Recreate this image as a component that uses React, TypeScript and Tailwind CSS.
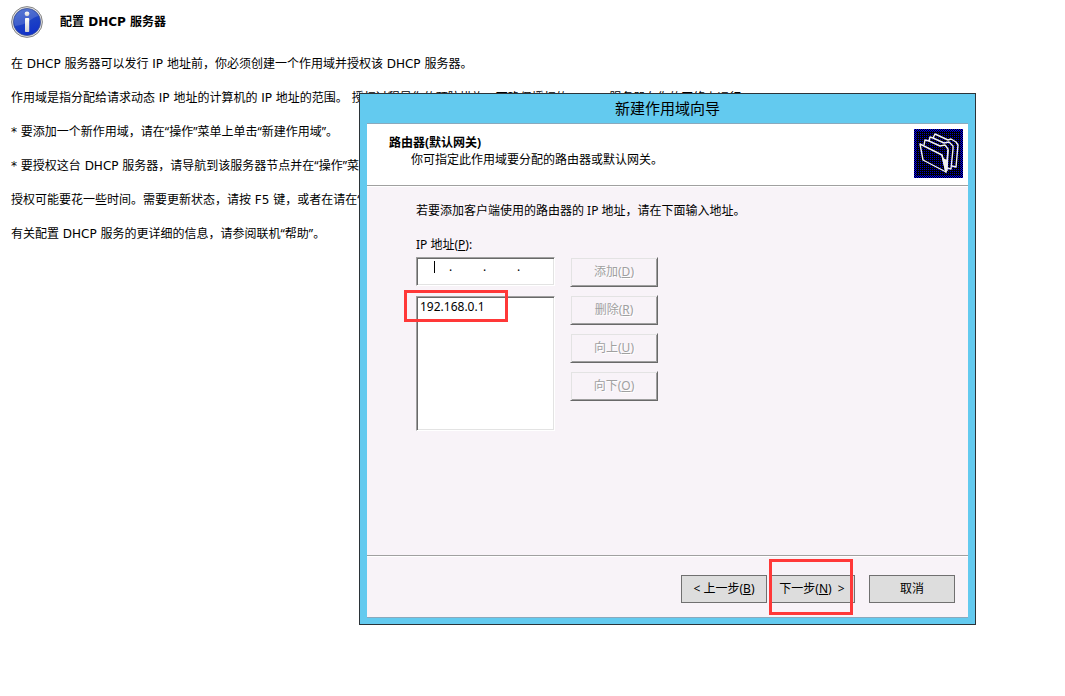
import type { ReactNode } from "react";

function InfoIcon() {
  return (
    <svg className="size-8 shrink-0" viewBox="0 0 32 32" aria-hidden="true">
      <defs>
        <linearGradient id="ball" x1="0" y1="0" x2="0.3" y2="1">
          <stop offset="0" stopColor="#3c63cc" />
          <stop offset="0.5" stopColor="#1f45c4" />
          <stop offset="1" stopColor="#1233c8" />
        </linearGradient>
        <linearGradient id="letter" x1="0" y1="0" x2="0" y2="1">
          <stop offset="0" stopColor="#ffffff" />
          <stop offset="1" stopColor="#d2d2d2" />
        </linearGradient>
      </defs>
      <circle cx="16" cy="16" r="15.4" fill="#e4e4e4" stroke="#858585" strokeWidth="1" />
      <circle cx="16" cy="16" r="13.6" fill="url(#ball)" stroke="#3d4f8c" strokeWidth="0.7" />
      <path d="M3 16a13 13 0 0 1 24.5-6C21 11 17 19 4 20z" fill="#ffffff" opacity="0.16" />
      <circle cx="16" cy="7.8" r="2.4" fill="url(#letter)" />
      <rect x="14" y="12" width="4.2" height="14" rx="0.8" fill="url(#letter)" />
    </svg>
  );
}

function FoldersIcon() {
  return (
    <svg className="size-[49px] shrink-0" viewBox="0 0 49 49" aria-hidden="true">
      <defs>
        <pattern id="dither" width="2" height="2" patternUnits="userSpaceOnUse">
          <rect width="2" height="2" fill="#000000" />
          <rect width="1" height="1" fill="#0000c8" />
        </pattern>
        <pattern id="checker" width="2" height="2" patternUnits="userSpaceOnUse">
          <rect width="2" height="2" fill="#000000" />
          <rect width="1" height="1" fill="#0000ff" />
          <rect x="1" y="1" width="1" height="1" fill="#0000ff" />
        </pattern>
      </defs>
      <rect width="49" height="49" fill="url(#checker)" />
      <rect x="2" y="2" width="45" height="45" fill="url(#dither)" />
      <g fill="none" stroke="#f0f0f0" strokeWidth="1.4" strokeLinejoin="round">
        <path d="M19 9l2-4 13 6 3-1 5 3 2 3-2 22-4-1" />
        <path d="M15 12l1-4 3 1 11 5 5-1 4 4v3l-2 20-4-1" />
        <path d="M10 16l1-5 4 1 11 5 5-1 3 4-1 22" />
        <path d="M6 15l22 11 4 17-23-12z" />
        <path d="M28 26l4 17 2-22" />
      </g>
      <path d="M29 29l4 2-1 12z" fill="#f0f0f0" />
    </svg>
  );
}

function ListButton({ children }: { children: ReactNode }) {
  return (
    <button
      disabled
      className="h-[30px] w-[88px] border border-t-[#f8f3f8] border-l-[#f8f3f8] border-r-[#696969] border-b-[#696969] text-[#a0a0a0] shadow-[inset_1px_1px_#e3e3e3,inset_-1px_-1px_#a0a0a0] [text-shadow:1px_1px_#ffffff]"
    >
      {children}
    </button>
  );
}

function WizardButton({ children }: { children: ReactNode }) {
  return (
    <button className="h-7 w-[86px] border border-[#707070] bg-[#dddddd] whitespace-pre">
      {children}
    </button>
  );
}

function Mark({ className }: { className: string }) {
  return (
    <span
      aria-hidden="true"
      className={`pointer-events-none absolute border-3 border-[#ff3838] ${className}`}
    />
  );
}

// four octet boxes in one sunken frame
function IpField() {
  return (
    <div className="relative flex h-[29px] border border-t-[#a0a0a0] border-l-[#a0a0a0] border-r-white border-b-white bg-white pl-0.5 leading-[18px] shadow-[inset_1px_1px_#696969,inset_-1px_-1px_#e3e3e3]">
      {[1, 2, 3, 4].map((part) => (
        <div key={part} className="flex">
          <input
            id={`ip-${part}`}
            aria-label={`IP ${part}`}
            maxLength={3}
            className="h-[18px] w-[30px] bg-transparent text-center outline-none"
          />
          {part < 4 && <span className="w-1">.</span>}
        </div>
      ))}
      <span className="absolute top-[3px] left-[17px] h-3 w-px bg-black" />
    </div>
  );
}

const paragraphs = [
  "在 DHCP 服务器可以发行 IP 地址前，你必须创建一个作用域并授权该 DHCP 服务器。",
  "作用域是指分配给请求动态 IP 地址的计算机的 IP 地址的范围。 授权过程是你的预防措施，可确保授权的 DHCP 服务器在你的网络上运行。",
  "* 要添加一个新作用域，请在“操作”菜单上单击“新建作用域”。",
  "* 要授权这台 DHCP 服务器，请导航到该服务器节点并在“操作”菜单上单击“授权”。",
  "授权可能要花一些时间。需要更新状态，请按 F5 键，或者在请在“操作”菜单上单击“刷新”。",
  "有关配置 DHCP 服务的更详细的信息，请参阅联机“帮助”。",
];

// menu names are set with the narrower quote marks
function Paragraph({ text }: { text: string }) {
  return (
    <p className="whitespace-nowrap">
      {text.split(/(“[^”]*”)/).map((part, index) =>
        part.startsWith("“") ? (
          <span key={index} className="font-['Noto_Sans','Noto_Sans_CJK_SC',sans-serif]">
            {part}
          </span>
        ) : (
          part
        )
      )}
    </p>
  );
}

function Wizard() {
  return (
    <section
      aria-label="新建作用域向导"
      className="absolute top-[93px] left-[359px] w-[617px] border border-[#2b3338] bg-[#63caef] px-[7px] pb-1.5"
    >
      <h2 className="flex h-[29px] items-center justify-center pb-0.5 text-[15px] leading-5">
        新建作用域向导
      </h2>
      <div className="border-t border-b border-[#8aa9bd] bg-[#f8f3f8]">
        <div className="flex h-[62px] justify-between border-b border-[#a0a0a0] bg-white pt-[5px] pr-[5px] pl-[22px]">
          <div className="pt-[5px]">
            <h3 className="leading-[17px] font-bold">路由器(默认网关)</h3>
            <p className="pl-[22px] leading-[17px]">你可指定此作用域要分配的路由器或默认网关。</p>
          </div>
          <FoldersIcon />
        </div>

        <div className="h-[369px] border-t border-white px-[49px] pt-[15px]">
          <p className="leading-[17px]">若要添加客户端使用的路由器的 IP 地址，请在下面输入地址。</p>
          <label htmlFor="ip-1" className="mt-4 block leading-[19px]">
            IP 地址(<u>P</u>):
          </label>
          <div className="mt-[3px] flex gap-[15px]">
            <div className="flex w-[139px] flex-col gap-2.5">
              <IpField />
              <div className="relative">
                <ul className="h-[135px] border border-t-[#a0a0a0] border-l-[#a0a0a0] border-r-white border-b-white bg-white px-[3px] pt-px leading-[18px] shadow-[inset_1px_1px_#696969,inset_-1px_-1px_#e3e3e3]">
                  <li>192.168.0.1</li>
                </ul>
                <Mark className="-top-1.5 -left-3 h-8 w-[104px]" />
              </div>
            </div>
            <div className="flex flex-col gap-2">
              <ListButton>添加(<u>D</u>)</ListButton>
              <ListButton>删除(<u>R</u>)</ListButton>
              <ListButton>向上(<u>U</u>)</ListButton>
              <ListButton>向下(<u>O</u>)</ListButton>
            </div>
          </div>
        </div>

        <div className="flex h-[62px] justify-end border-t border-[#a0a0a0] pt-[19px] pr-[13px] shadow-[inset_0_1px_#ffffff]">
          <WizardButton>{"< "}上一步(<u>B</u>)</WizardButton>
          <div className="relative ml-0.5">
            <WizardButton>下一步(<u>N</u>){"  >"}</WizardButton>
            <Mark className="-top-4 left-0 h-14 w-[84px]" />
          </div>
          <div className="ml-3.5">
            <WizardButton>取消</WizardButton>
          </div>
        </div>
      </div>
    </section>
  );
}

export default function App() {
  return (
    <main className="relative min-h-screen overflow-hidden bg-white font-['Noto_Sans','Noto_Sans_CJK_SC',sans-serif] text-xs text-black">
      <div className="font-['DejaVu_Sans','Noto_Sans_CJK_SC',sans-serif]">
        <header className="flex items-center gap-[17px] px-[11px] pt-1.5">
          <InfoIcon />
          <h1 className="font-bold">配置 DHCP 服务器</h1>
        </header>
        <div className="mt-[18px] flex flex-col gap-[18px] px-[11px] leading-4">
          {paragraphs.map((text) => (
            <Paragraph key={text} text={text} />
          ))}
        </div>
      </div>
      <Wizard />
    </main>
  );
}
